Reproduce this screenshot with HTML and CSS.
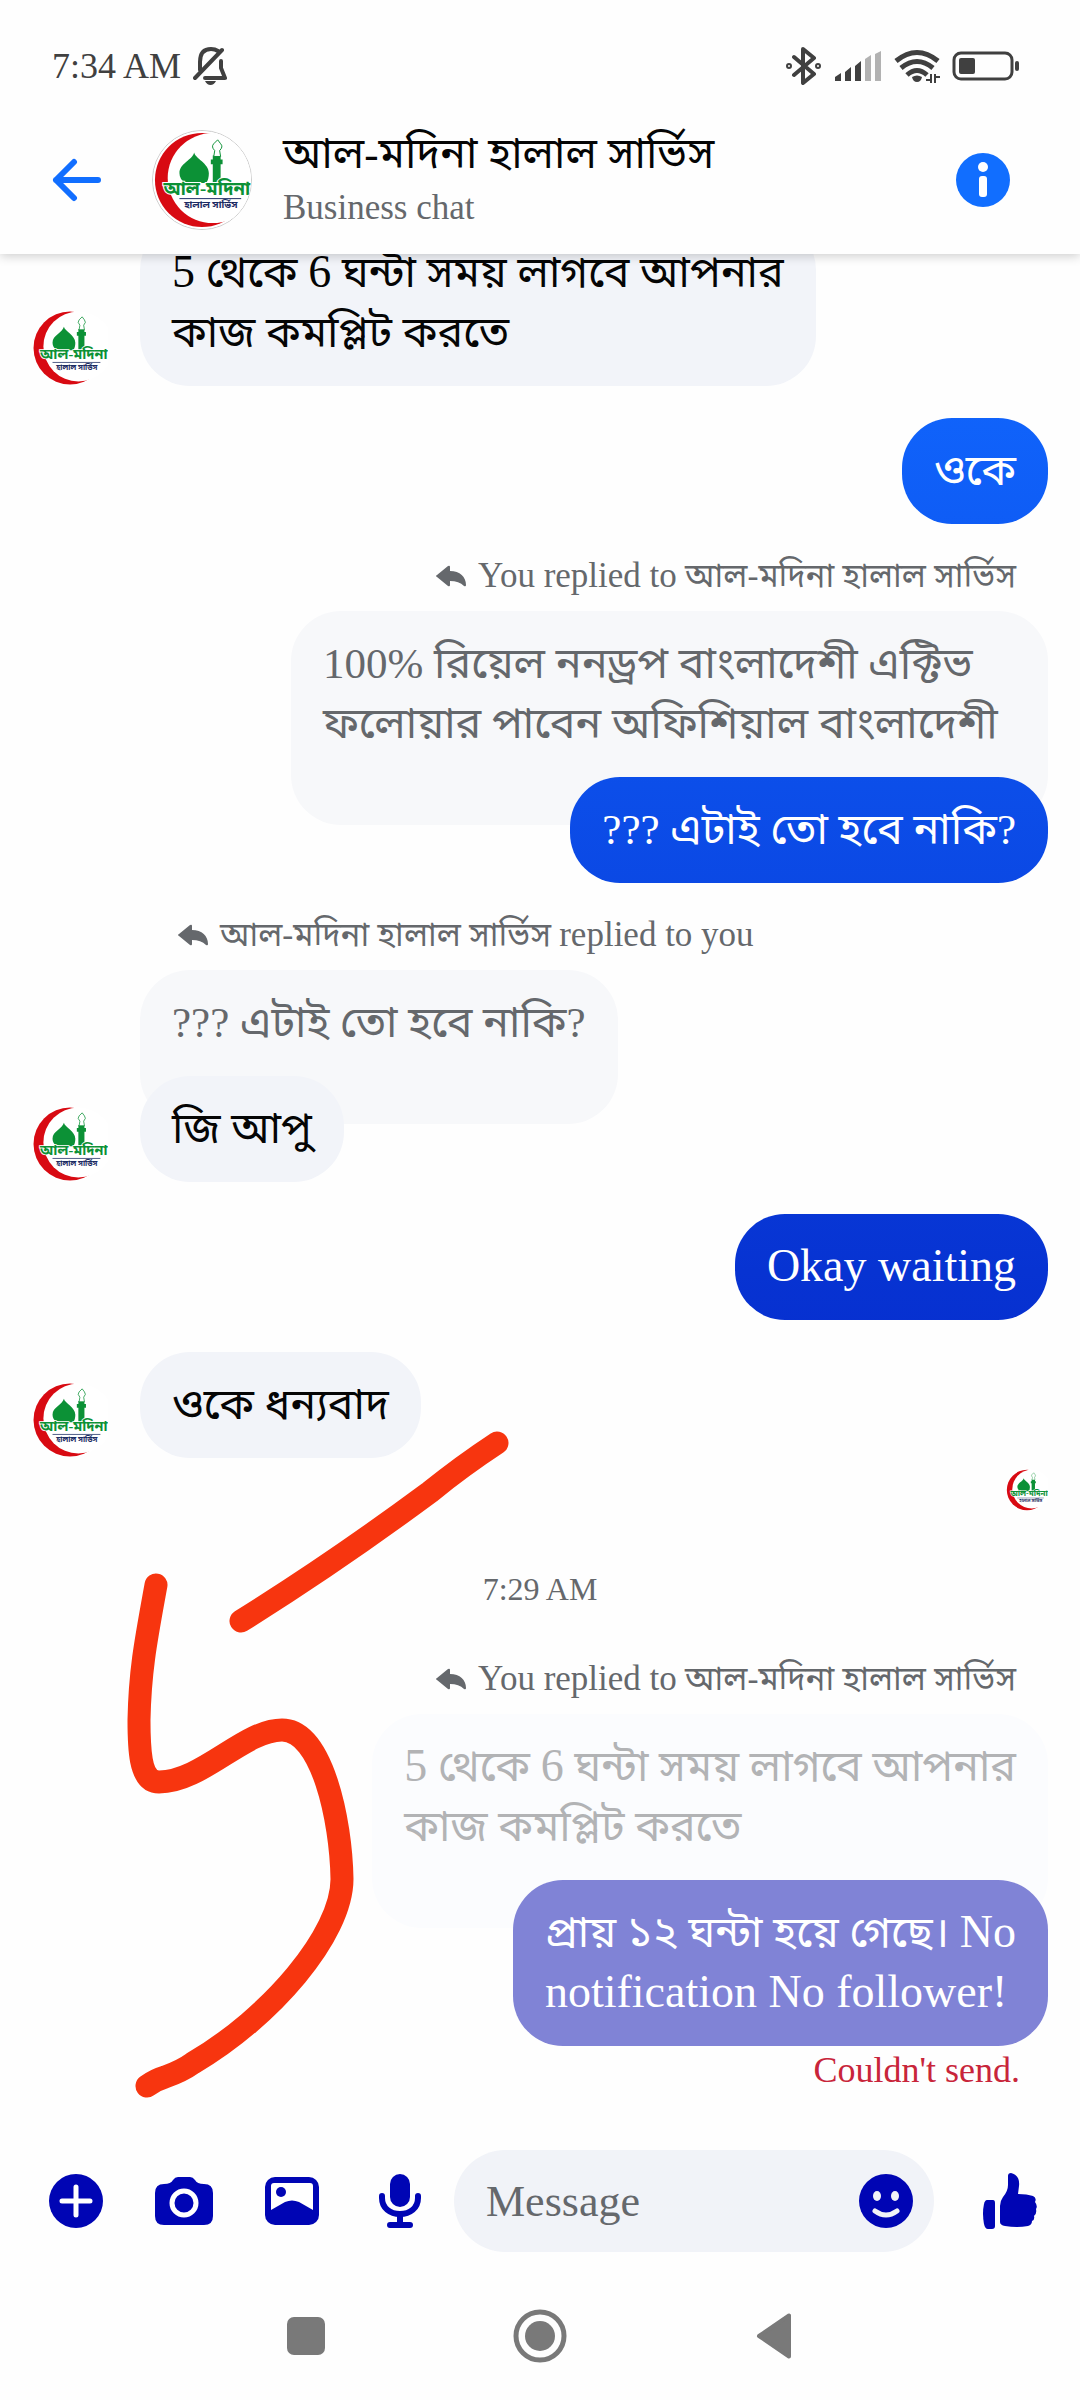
FILE: index.html
```html
<!DOCTYPE html>
<html lang="bn">
<head>
<meta charset="utf-8">
<meta name="viewport" content="width=device-width, initial-scale=1">
<title>আল-মদিনা হালাল সার্ভিস</title>
<link rel="stylesheet" href="styles.css">
</head>
<body>
<svg class="defs" aria-hidden="true">
  <symbol id="logo" viewBox="0 0 100 100">
    <circle cx="50" cy="50" r="50" fill="#fff"/>
    <circle cx="50" cy="50" r="48" fill="#d80a12"/>
    <circle cx="61" cy="48" r="46" fill="#fff"/>
    <path d="M42 22C43 28 57 33 57 43Q57 50 54 53H33Q27 49 27 43C27 33 40 30 42 22Z" fill="#0c9136"/>
    <path d="M61 55V34H59V29H61V25H69V29H71V34H69V55Z" fill="#0c9136"/>
    <path d="M62 26L63 20Q59 16 62 13L66 9L69 13Q72 16 68 20L69 26Z" fill="#fff" stroke="#0c9136" stroke-width="1"/>
    <text class="logo-name" x="55" y="65">আল-মদিনা</text>
    <path d="M27 69H90" stroke="#1b2b63" stroke-width="1"/>
    <text class="logo-sub" x="59" y="79">হালাল সার্ভিস</text>
  </symbol>
  <symbol id="reply" viewBox="0 0 30 22">
    <path d="M12 1Q14 0 14 2V6C24 6 30 12 30 20Q30 22 28 21Q23 16 14 16V20Q14 22 12 21L1 12Q-1 11 1 10Z" fill="#65686c"/>
  </symbol>
</svg>

<div class="app">
  <header class="top">
    <div class="status">
      <div class="status-left" lang="en">
        <span>7:34 AM</span>
        <svg class="bell" viewBox="0 0 34 38" width="34" height="38" fill="none" stroke="#404040" stroke-width="4" stroke-linecap="round" stroke-linejoin="round">
          <path d="M7 23V15Q7 2 18 2Q22 2 25 4M28 14V21L32 31H12M2 31L29 3"/>
          <path d="M12 34H23Q21 38 17.500 38Q14 38 12 34Z" fill="#404040" stroke="none"/>
        </svg>
      </div>
      <div class="status-right">
        <svg viewBox="0 0 36 38" width="36" height="38" fill="none" stroke="#404040" stroke-width="4" stroke-linejoin="round" stroke-linecap="round">
          <path d="M8 10L28 27L17 36V2L28 11L8 28"/>
          <circle cx="3" cy="19" r="1"/><circle cx="32" cy="19" r="1"/>
        </svg>
        <svg viewBox="0 0 48 32" width="48" height="32">
          <path d="M1 31V27L7 23V31ZM11 31V22L17 17V31ZM21 31V16L27 11V31Z" fill="#404040"/>
          <path d="M31 31V9L37 5V31ZM41 31V4L47 1V31Z" fill="#b2b2b2"/>
        </svg>
        <svg viewBox="0 0 46 34" width="46" height="34" fill="none" stroke="#404040" stroke-width="5">
          <path d="M2 12Q23 -5 44 12M7 19Q23 6 39 19M13 26Q23 17 33 26"/>
          <path d="M18 28Q23 25 28 28Q27 33 23 33Q19 33 18 28Z" fill="#404040" stroke="none"/>
          <path d="M37 25V34M32 31H37M41 34V25M41 28H46" stroke-width="2"/>
        </svg>
        <svg viewBox="0 0 68 30" width="68" height="30">
          <rect x="2" y="2" width="58" height="26" rx="7" fill="none" stroke="#404040" stroke-width="3"/>
          <rect x="7" y="7" width="16" height="16" rx="2" fill="#404040"/>
          <rect x="63" y="10" width="4" height="10" rx="2" fill="#404040"/>
        </svg>
      </div>
    </div>
    <div class="bar">
      <button class="icon-btn" type="button" aria-label="Back">
        <svg viewBox="0 0 50 44" width="50" height="44" fill="none" stroke="#116eff" stroke-width="6" stroke-linecap="round" stroke-linejoin="round"><path d="M22 4L4 22L22 40M4 22H46"/></svg>
      </button>
      <svg class="avatar-lg" aria-hidden="true"><use href="#logo"/></svg>
      <div class="who">
        <h1>আল-মদিনা হালাল সার্ভিস</h1>
        <p lang="en">Business chat</p>
      </div>
      <button class="icon-btn info" type="button" aria-label="Details">
        <svg viewBox="0 0 54 54" width="54" height="54"><circle cx="27" cy="27" r="27" fill="#116eff"/><circle cx="27" cy="14" r="5" fill="#fff"/><rect x="23" y="23" width="8" height="21" rx="3" fill="#fff"/></svg>
      </button>
    </div>
  </header>

  <main class="chat">
    <div class="row in">
      <svg class="avatar" aria-hidden="true"><use href="#logo"/></svg>
      <p class="bubble"><span lang="en">5</span> থেকে <span lang="en">6</span> ঘন্টা সময় লাগবে আপনার<br>কাজ কমপ্লিট করতে</p>
    </div>
    <div class="row out"><p class="bubble">ওকে</p></div>

    <div class="row out">
      <div class="reply">
        <p class="label"><svg><use href="#reply"/></svg><span><span lang="en">You replied to</span> আল-মদিনা হালাল সার্ভিস</span></p>
        <p class="quote long">100% রিয়েল ননড্রপ বাংলাদেশী এক্টিভ ফলোয়ার পাবেন অফিশিয়াল বাংলাদেশী</p>
        <p class="bubble">??? এটাই তো হবে নাকি?</p>
      </div>
    </div>

    <div class="row in">
      <svg class="avatar" aria-hidden="true"><use href="#logo"/></svg>
      <div class="reply">
        <p class="label"><svg><use href="#reply"/></svg><span>আল-মদিনা হালাল সার্ভিস <span lang="en">replied to you</span></span></p>
        <p class="quote">??? এটাই তো হবে নাকি?</p>
        <p class="bubble">জি আপু</p>
      </div>
    </div>

    <div class="row out"><p class="bubble"><span lang="en">Okay waiting</span></p></div>
    <div class="row in">
      <svg class="avatar" aria-hidden="true"><use href="#logo"/></svg>
      <p class="bubble">ওকে ধন্যবাদ</p>
    </div>
    <svg class="seen" aria-hidden="true"><use href="#logo"/></svg>
    <p class="time" lang="en">7:29 AM</p>

    <div class="row out unsent">
      <div class="reply">
        <p class="label"><svg><use href="#reply"/></svg><span><span lang="en">You replied to</span> আল-মদিনা হালাল সার্ভিস</span></p>
        <p class="quote"><span lang="en">5</span> থেকে <span lang="en">6</span> ঘন্টা সময় লাগবে আপনার<br>কাজ কমপ্লিট করতে</p>
        <p class="bubble">প্রায় ১২ ঘন্টা হয়ে গেছে। <span lang="en">No<br>notification No follower!</span></p>
      </div>
    </div>
    <p class="error" lang="en">Couldn't send.</p>

    <svg class="sketch" viewBox="110 1418 420 700" fill="none" stroke="#f7350f" stroke-width="23" stroke-linecap="round" stroke-linejoin="round" aria-hidden="true">
      <path d="M241 1621C310 1578 380 1529 430 1492Q462 1466 497 1443"/>
      <path d="M156 1585C146 1640 140 1670 139 1720C139 1745 139 1782 159 1782C202 1782 244 1730 282 1730C322 1730 341 1820 342 1879C342 1935 270 2018 193 2063Q182 2071 165 2077Q155 2080 147 2086"/>
    </svg>
  </main>

  <form class="composer">
    <button type="button" aria-label="More">
      <svg viewBox="0 0 54 54" width="54" height="54"><circle cx="27" cy="27" r="27" fill="#0005b4"/><path d="M27 13V41M13 27H41" stroke="#fff" stroke-width="5" stroke-linecap="round"/></svg>
    </button>
    <button type="button" aria-label="Camera">
      <svg viewBox="0 0 58 54" width="58" height="54"><path d="M9 10Q16 10 18 6Q20 3 23 3H35Q38 3 40 6Q42 10 49 10Q58 10 58 19V42Q58 51 49 51H9Q0 51 0 42V19Q0 10 9 10Z" fill="#0005b4"/><circle cx="29" cy="29" r="12" fill="none" stroke="#fff" stroke-width="5"/></svg>
    </button>
    <button type="button" aria-label="Gallery">
      <svg viewBox="0 0 54 54" width="54" height="54"><rect y="3" width="54" height="48" rx="10" fill="#0005b4"/><path d="M6 36V12Q6 9 9 9H45Q48 9 48 12V36L34 28Q27 25 20 28Z" fill="#fff"/><circle cx="16" cy="18" r="5" fill="#0005b4"/></svg>
    </button>
    <button type="button" aria-label="Voice message">
      <svg viewBox="0 0 42 54" width="42" height="54"><rect x="11" width="20" height="33" rx="10" fill="#0005b4"/><path d="M3 22V24C3 34 11 40 21 40C31 40 39 34 39 24V22" fill="none" stroke="#0005b4" stroke-width="6" stroke-linecap="round"/><path d="M18 40H24V48H31Q34 48 34 51T31 54H11Q8 54 8 51T11 48H18Z" fill="#0005b4"/></svg>
    </button>
    <div class="field">
      <input type="text" placeholder="Message" aria-label="Message" lang="en">
      <button class="emoji" type="button" aria-label="Emoji">
        <svg viewBox="0 0 54 54" width="54" height="54"><circle cx="27" cy="27" r="27" fill="#0005b4"/><ellipse cx="18" cy="22" rx="4" ry="5" fill="#f1f3f8"/><ellipse cx="36" cy="22" rx="4" ry="5" fill="#f1f3f8"/><path d="M16 37Q27 45 38 37" fill="none" stroke="#f1f3f8" stroke-width="5" stroke-linecap="round"/></svg>
      </button>
    </div>
    <button class="like" type="button" aria-label="Like">
      <svg viewBox="0 0 54 57" width="54" height="57" fill="#0005b4"><path d="M4 27H10Q12 27 12 30V53Q12 56 9 56H5Q2 56 1 51Q-1 40 1 31Q2 27 4 27Z"/><path d="M17 33Q17 28 20 24Q25 18 25 12V3Q25 0 28 0C33 1 37 5 36 13L35 21Q44 21 50 23Q54 25 52 29Q55 33 53 36Q54 41 51 43Q52 47 49 48Q49 52 45 53Q34 55 22 53Q17 52 17 49Z"/></svg>
    </button>
  </form>

  <nav class="keys" aria-label="System">
    <button type="button" aria-label="Recent apps"><svg viewBox="0 0 38 38" width="38" height="38"><rect width="38" height="38" rx="7" fill="#797979"/></svg></button>
    <button type="button" aria-label="Home"><svg viewBox="0 0 54 54" width="54" height="54"><circle cx="27" cy="27" r="24" fill="none" stroke="#797979" stroke-width="5"/><circle cx="27" cy="27" r="15" fill="#797979"/></svg></button>
    <button type="button" aria-label="Back"><svg viewBox="0 0 36 46" width="36" height="46"><path d="M33 2.500V43.500L3 23Z" fill="#797979" stroke="#797979" stroke-width="4" stroke-linejoin="round"/></svg></button>
  </nav>
</div>
</body>
</html>
```
FILE: styles.css
```css
:root {
  --text-font: "Liberation Serif", "Noto Sans Bengali", "Noto Sans", serif;
  --grey: #65686c;
}

* { box-sizing: border-box; margin: 0; }

body {
  background: #fefefe;
  color: #050505;
  font-family: var(--text-font);
  font-weight: 400;
}

button, input { font: inherit; border: 0; padding: 0; background: none; }
button { display: flex; align-items: center; justify-content: center; }
svg { display: block; flex: none; }

.defs { position: absolute; width: 0; height: 0; }
.logo-name, .logo-sub { text-anchor: middle; font-weight: 700; }
.logo-name {
  font-size: 19px;
  fill: #0c9136;
  stroke: #fff;
  stroke-width: 2px;
  paint-order: stroke;
}
.logo-sub { font-size: 10px; fill: #1b2b63; }

.app { display: flex; flex-direction: column; height: 100vh; }

/* header */
.top {
  position: relative;
  z-index: 1;
  padding: 44px 52px 24px;
  background: #fefefe;
  box-shadow: 0 2px 10px rgba(0, 0, 0, .2);
}
.status {
  display: flex;
  justify-content: space-between;
  align-items: center;
  height: 44px;
  font-size: 36px;
  line-height: 44px;
  color: #404040;
}
.status-left { display: flex; align-items: center; gap: 12px; }
.status-right { display: flex; align-items: center; gap: 12px; margin-right: 8px; }
.bar { display: flex; align-items: center; margin-top: 42px; }
.avatar-lg {
  width: 100px;
  height: 100px;
  margin-left: 50px;
  border-radius: 50%;
  border: 1px solid #ccc;
}
.who { flex: 1; display: grid; gap: 8px; margin-left: 31px; }
.who h1 { font-size: 43px; font-weight: 400; line-height: 48px; }
.who p { font-size: 35px; line-height: 44px; color: var(--grey); }
.info { margin-right: 18px; }

/* conversation */
.chat {
  position: relative;
  flex: 1;
  min-height: 0;
  display: flex;
  flex-direction: column;
  justify-content: flex-end;
  gap: 32px;
  padding: 0 32px 28px;
  overflow: hidden;
}
.row { display: flex; align-items: flex-end; flex: none; gap: 32px; }
.out { justify-content: flex-end; }
.avatar { width: 76px; height: 76px; }
.bubble, .quote {
  padding: 23px 32px;
  border-radius: 50px;
  font-size: 43px;
  line-height: 60px;
  white-space: nowrap;
}
.bubble { background: #f2f4f9; }
.bubble :lang(en), .quote :lang(en) { font-size: 46px; line-height: 48px; }
.out .bubble {
  color: #fff;
  background: linear-gradient(#1479ff, #1063fb 17%, #0733d2 53%, #0000b0) fixed;
}
.reply { display: flex; flex-direction: column; align-items: flex-start; }
.out .reply { align-items: flex-end; }
.label {
  display: flex;
  align-items: center;
  gap: 12px;
  padding: 0 32px 0 38px;
  margin-bottom: 15px;
  font-size: 33px;
  line-height: 40px;
  color: var(--grey);
}
.label :lang(en) { font-size: 35px; line-height: 36px; }
.label svg { width: 30px; height: 22px; }
.quote { padding-bottom: 71px; background: #f7f8fa; color: var(--grey); }
.quote.long { max-width: 757px; white-space: normal; }
.reply .bubble { margin-top: -48px; }
.seen { align-self: flex-end; width: 42px; height: 42px; margin-top: -21px; }
.time {
  margin: 26px 0 18px;
  text-align: center;
  font-size: 32px;
  line-height: 40px;
  color: var(--grey);
}
.unsent .quote { background: #fbfcfe; color: #b2b3b5; }
.out.unsent .bubble { background: #8083d6; }
.error {
  margin-top: -28px;
  padding-right: 28px;
  text-align: right;
  font-size: 36px;
  line-height: 40px;
  color: #c8253a;
}
.sketch { position: absolute; left: 110px; bottom: 0; width: 420px; height: 700px; }

/* message box */
.composer { display: flex; align-items: center; padding: 32px 16px 20px 22px; }
.composer > button { width: 108px; height: 102px; }
.field {
  flex: 1;
  min-width: 0;
  display: flex;
  align-items: center;
  height: 102px;
  padding: 0 21px 0 32px;
  border-radius: 51px;
  background: #f1f3f8;
}
.field input { flex: 1; min-width: 0; height: 60px; font-size: 44px; outline: 0; }
.field input::placeholder { color: var(--grey); opacity: 1; }
.composer .like { margin-left: 22px; }

.keys { display: grid; grid-template-columns: repeat(3, 234px); justify-content: center; height: 128px; }
```
